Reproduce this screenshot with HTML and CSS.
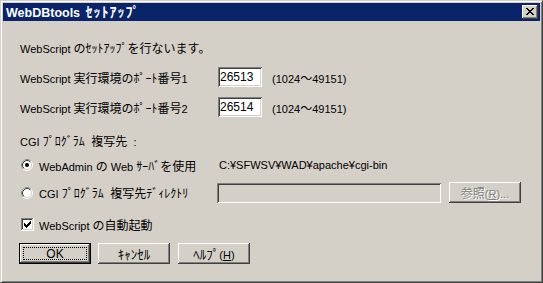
FILE: index.html
```html
<!DOCTYPE html>
<html lang="ja">
<head>
<meta charset="utf-8">
<link rel="stylesheet" href="styles.css">
</head>
<body>
<div class="window">
  <div class="titlebar">
    <span class="title">WebDBtools <span class="ja-title">ｾｯﾄｱｯﾌﾟ</span></span>
    <span class="close">
      <svg width="8" height="7" viewBox="0 0 8 7" shape-rendering="crispEdges">
        <rect x="0" y="0" width="2" height="1"/><rect x="6" y="0" width="2" height="1"/>
        <rect x="1" y="1" width="2" height="1"/><rect x="5" y="1" width="2" height="1"/>
        <rect x="2" y="2" width="4" height="1"/>
        <rect x="3" y="3" width="2" height="1"/>
        <rect x="2" y="4" width="4" height="1"/>
        <rect x="1" y="5" width="2" height="1"/><rect x="5" y="5" width="2" height="1"/>
        <rect x="0" y="6" width="2" height="1"/><rect x="6" y="6" width="2" height="1"/>
      </svg>
    </span>
  </div>
  <div class="content">
    <div class="row r-intro"><span>WebScript <span class="ja">のｾｯﾄｱｯﾌﾟを行ないます。</span></span></div>
    <div class="row r-port1">
      <span class="label">WebScript <span class="ja">実行環境のﾎﾟｰﾄ番号</span>1</span>
      <span class="field">26513</span>
      <span class="range">(1024<span class="ja">～</span>49151)</span>
    </div>
    <div class="row r-port2">
      <span class="label">WebScript <span class="ja">実行環境のﾎﾟｰﾄ番号</span>2</span>
      <span class="field">26514</span>
      <span class="range">(1024<span class="ja">～</span>49151)</span>
    </div>
    <div class="row r-cgi"><span>CGI <span class="ja">ﾌﾟﾛｸﾞﾗﾑ 複写先</span> <span class="colon">:</span></span></div>
    <div class="row r-opt1">
      <span class="opt opt-wide">
        <svg class="radio" width="12" height="12" viewBox="0 0 12 12">
          <circle cx="6" cy="6" r="5" fill="#fff"/>
          <circle cx="6" cy="6" r="5.5" fill="none" stroke="#fff" stroke-width="1"/>
          <path d="M2.11 9.89 A5.5 5.5 0 0 1 9.89 2.11" fill="none" stroke="#808080" stroke-width="1"/>
          <circle cx="6" cy="6" r="4.5" fill="none" stroke="#d4d0c8" stroke-width="1"/>
          <path d="M2.82 9.18 A4.5 4.5 0 0 1 9.18 2.82" fill="none" stroke="#404040" stroke-width="1"/>
          <circle cx="6" cy="6" r="2" fill="#000"/>
        </svg>
        <span>WebAdmin <span class="ja">の</span> Web <span class="ja">ｻｰﾊﾞを使用</span></span>
      </span>
      <span class="path">C:¥SFWSV¥WAD¥apache¥cgi-bin</span>
    </div>
    <div class="row r-opt2">
      <span class="opt opt-narrow">
        <svg class="radio" width="12" height="12" viewBox="0 0 12 12">
          <circle cx="6" cy="6" r="5" fill="#fff"/>
          <circle cx="6" cy="6" r="5.5" fill="none" stroke="#fff" stroke-width="1"/>
          <path d="M2.11 9.89 A5.5 5.5 0 0 1 9.89 2.11" fill="none" stroke="#808080" stroke-width="1"/>
          <circle cx="6" cy="6" r="4.5" fill="none" stroke="#d4d0c8" stroke-width="1"/>
          <path d="M2.82 9.18 A4.5 4.5 0 0 1 9.18 2.82" fill="none" stroke="#404040" stroke-width="1"/>
        </svg>
        <span>CGI <span class="ja">ﾌﾟﾛｸﾞﾗﾑ 複写先ﾃﾞｨﾚｸﾄﾘ</span></span>
      </span>
      <span class="field field-disabled"></span>
      <span class="btn btn-disabled"><span><span class="ja">参照</span>(<u>R</u>)...</span></span>
    </div>
    <div class="row r-check">
      <svg class="check" width="13" height="13" viewBox="0 0 13 13" shape-rendering="crispEdges">
        <rect x="0" y="0" width="13" height="13" fill="#fff"/>
        <rect x="0" y="0" width="12" height="1" fill="#808080"/>
        <rect x="0" y="0" width="1" height="12" fill="#808080"/>
        <rect x="1" y="1" width="10" height="1" fill="#404040"/>
        <rect x="1" y="1" width="1" height="10" fill="#404040"/>
        <rect x="1" y="11" width="11" height="1" fill="#d4d0c8"/>
        <rect x="11" y="1" width="1" height="11" fill="#d4d0c8"/>
        <g fill="#000">
          <rect x="3" y="5" width="1" height="3"/>
          <rect x="4" y="6" width="1" height="3"/>
          <rect x="5" y="7" width="1" height="3"/>
          <rect x="6" y="6" width="1" height="3"/>
          <rect x="7" y="5" width="1" height="3"/>
          <rect x="8" y="4" width="1" height="3"/>
          <rect x="9" y="3" width="1" height="3"/>
        </g>
      </svg>
      <span class="check-label">WebScript <span class="ja">の自動起動</span></span>
    </div>
    <div class="row r-buttons">
      <span class="btn btn-default"><span class="focus">OK</span></span>
      <span class="btn btn-cancel"><span class="ja ja-btn">ｷｬﾝｾﾙ</span></span>
      <span class="btn btn-help"><span><span class="ja ja-btn">ﾍﾙﾌﾟ</span>(<u>H</u>)</span></span>
    </div>
  </div>
</div>
</body>
</html>
```

FILE: styles.css
```css
* { box-sizing: border-box; }
html, body { margin: 0; padding: 0; }
body {
  width: 543px;
  height: 283px;
  overflow: hidden;
  background: #d4d0c8;
  font-family: "Liberation Sans", "Noto Sans CJK JP", sans-serif;
  font-size: 11px;
  color: #000;
}
.ja {
  font-family: "Noto Sans CJK JP", sans-serif;
  font-size: 12px;
  word-spacing: 4px;
}
.ja-btn { font-size: 13px; }
.colon { margin-left: 3px; }
.window {
  width: 543px;
  height: 283px;
  background: #d4d0c8;
  border: 1px solid;
  border-color: #d4d0c8 #404040 #404040 #d4d0c8;
  box-shadow: inset 1px 1px #fff, inset -1px -1px #808080;
  padding: 2px;
  display: flex;
  flex-direction: column;
}
.titlebar {
  height: 18px;
  background: #0a246a;
  display: flex;
  align-items: center;
  padding-left: 3px;
  flex-shrink: 0;
}
.title {
  color: #fff;
  font-weight: bold;
  font-size: 12.5px;
  line-height: 18px;
}
.ja-title {
  font-family: "Noto Sans CJK JP", sans-serif;
  font-size: 14px;
  font-weight: bold;
  letter-spacing: 1px;
  margin-left: 2px;
}
.close {
  margin-left: auto;
  margin-right: 2px;
  width: 16px;
  height: 14px;
  background: #d4d0c8;
  box-shadow: inset -1px -1px #404040, inset 1px 1px #fff, inset -2px -2px #808080, inset 2px 2px #d4d0c8;
  display: flex;
  align-items: center;
  justify-content: center;
  padding-bottom: 1px;
}
.close svg { display: block; fill: #000; }
.content {
  padding-left: 17px;
  display: flex;
  flex-direction: column;
}
.row {
  display: flex;
  align-items: center;
  height: 20px;
  white-space: nowrap;
}
.r-intro { margin-top: 16px; }
.r-port1 { margin-top: 10px; }
.r-port2 { margin-top: 10px; }
.r-cgi { margin-top: 13px; }
.r-opt1 { margin-top: 5px; }
.r-opt2 { margin-top: 7px; height: 21px; }
.r-check { margin-top: 11px; height: 21px; }
.r-buttons { margin-top: 8px; height: 21px; }
.label { width: 198px; flex-shrink: 0; }
.field {
  width: 44px;
  height: 20px;
  background: #fff;
  box-shadow: inset 1px 1px #808080, inset -1px -1px #fff, inset 2px 2px #404040, inset -2px -2px #d4d0c8;
  padding-left: 2px;
  font-size: 12px;
  line-height: 20px;
  flex-shrink: 0;
}
.field-disabled {
  width: 224px;
  background: #d4d0c8;
}
.range { margin-left: 10px; }
.opt {
  display: flex;
  align-items: center;
  flex-shrink: 0;
}
.opt-wide { width: 199px; }
.opt-narrow { width: 197px; }
.radio { display: block; margin-left: 1px; margin-right: 6px; }
.check { display: block; margin-left: 1px; margin-right: 5px; }
.btn {
  width: 72px;
  height: 21px;
  background: #d4d0c8;
  box-shadow: inset -1px -1px #404040, inset 1px 1px #fff, inset -2px -2px #808080, inset 2px 2px #d4d0c8;
  display: flex;
  align-items: center;
  justify-content: center;
  flex-shrink: 0;
  font-size: 12px;
}
.btn u { text-decoration: underline; }
.btn-disabled {
  margin-left: 8px;
  color: #808080;
  text-shadow: 1px 1px #fff;
  font-size: 11px;
}
.btn-default {
  margin-left: -1px;
  border: 1px solid #000;
  padding: 3px;
}
.focus {
  width: 100%;
  height: 100%;
  border: 1px dotted #000;
  display: flex;
  align-items: center;
  justify-content: center;
}
.btn-cancel { margin-left: 7px; }
.btn-help { margin-left: 8px; font-size: 11px; }
```
